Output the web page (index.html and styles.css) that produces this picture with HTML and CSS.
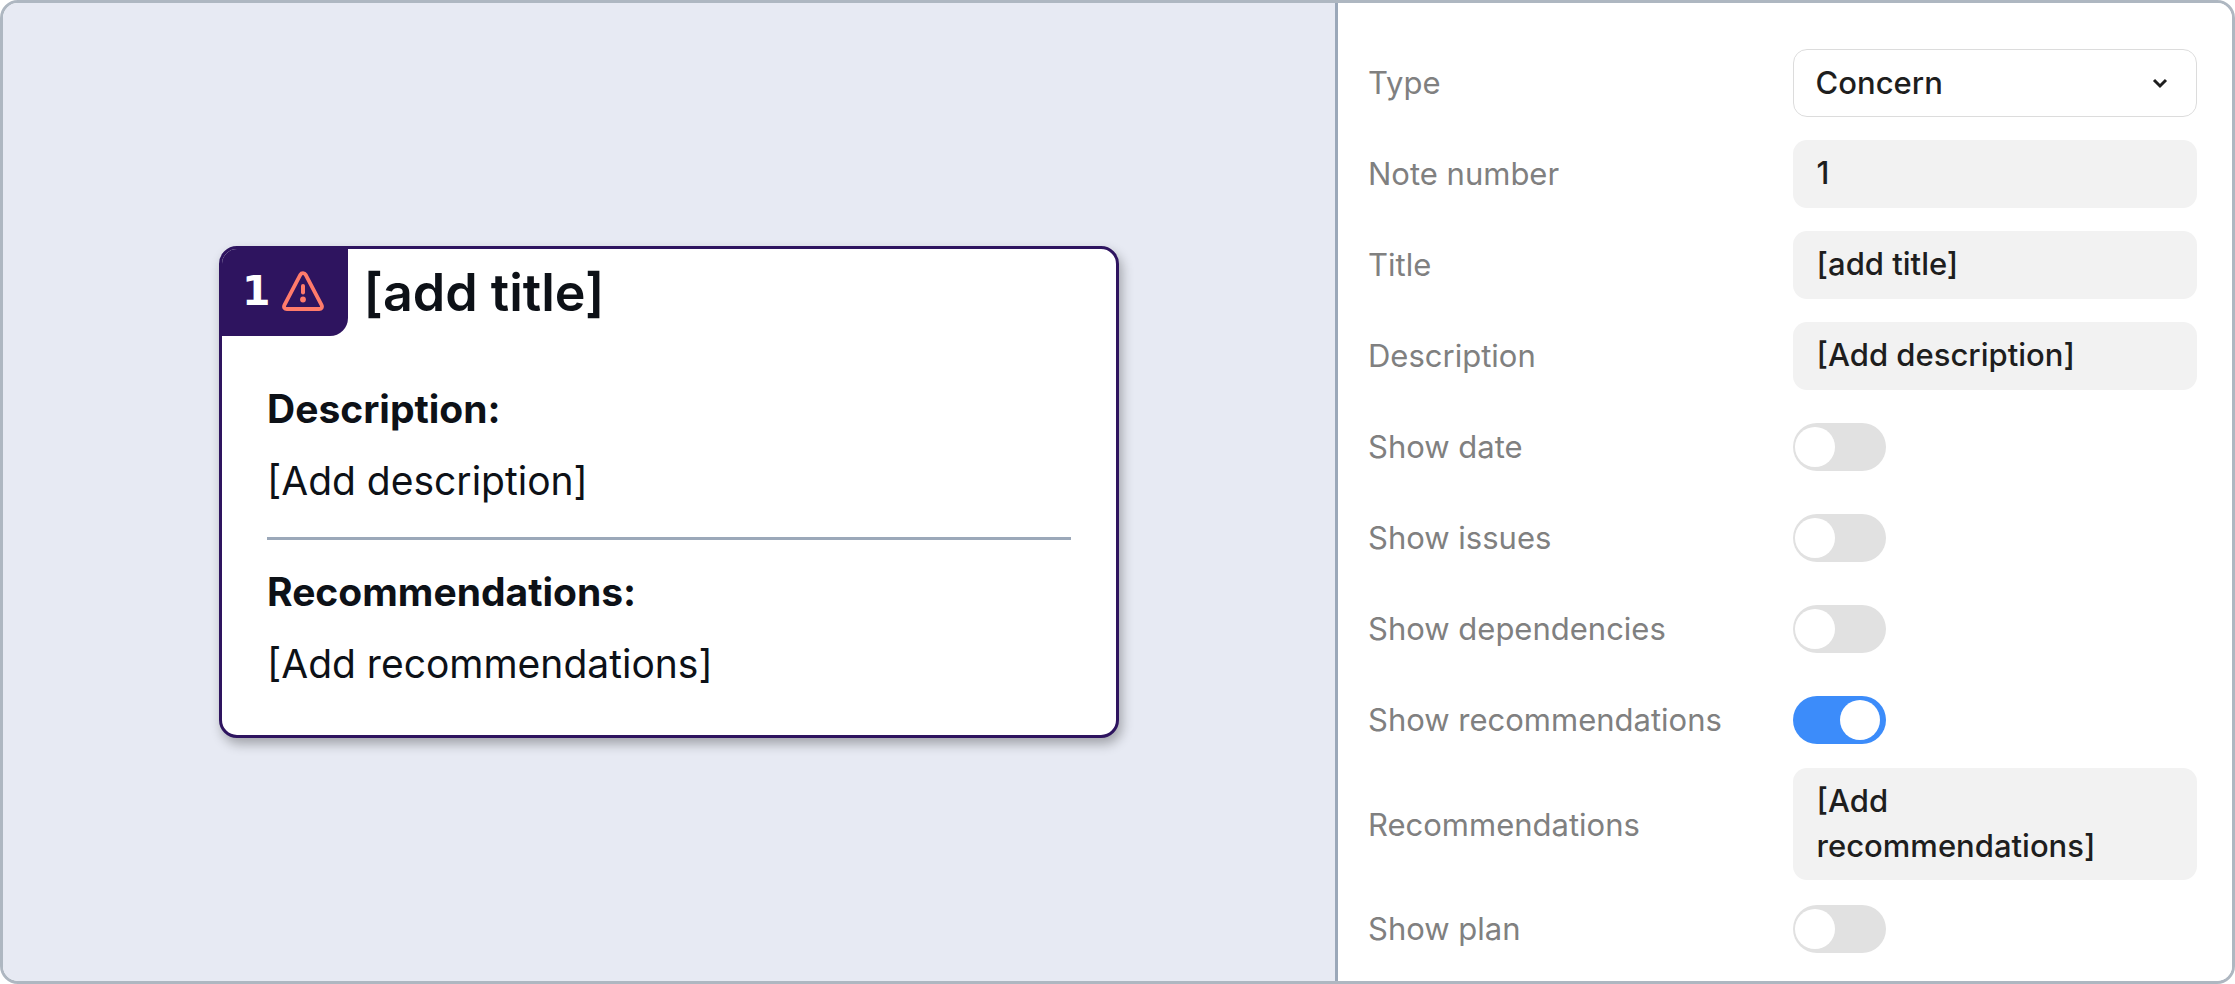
FILE: index.html
```html
<!DOCTYPE html>
<html lang="en">
<head>
<meta charset="utf-8">
<title>Note properties</title>
<link rel="stylesheet" href="styles.css">
</head>
<body>
<main class="frame">
  <section class="canvas">
    <article class="note">
      <header class="note-header">
        <div class="note-badge">
          <span class="note-number">1</span>
          <svg class="note-icon" viewBox="0 0 42 40" fill="none" aria-hidden="true">
            <path d="M18.4 3.6 2.4 34.2C1.4 36.2 2.6 38 4.8 38H37.2C39.4 38 40.6 36.2 39.6 34.2L23.6 3.6C22.5 1.6 19.5 1.6 18.4 3.6Z" stroke="#ff7b6b" stroke-width="3.8" stroke-linejoin="round"/>
            <path d="M21 15V21.5" stroke="#ff7b6b" stroke-width="4" stroke-linecap="round"/>
            <circle cx="21" cy="28.5" r="2.9" fill="#ff7b6b"/>
          </svg>
        </div>
        <h1 class="note-title">[add title]</h1>
      </header>
      <div class="note-body">
        <section class="note-section">
          <h2 class="note-heading">Description:</h2>
          <p class="note-text">[Add description]</p>
        </section>
        <hr class="note-rule">
        <section class="note-section">
          <h2 class="note-heading">Recommendations:</h2>
          <p class="note-text">[Add recommendations]</p>
        </section>
      </div>
    </article>
  </section>
  <form class="panel">
    <div class="row">
      <label class="label" for="type">Type</label>
      <div class="select-wrap">
        <select class="field field-select" id="type"><option>Concern</option></select>
        <svg class="chevron" viewBox="0 0 16 12" fill="none" aria-hidden="true"><path d="M2 3 8 9 14 3" stroke="#1e1e1e" stroke-width="3"/></svg>
      </div>
    </div>
    <div class="row">
      <label class="label" for="number">Note number</label>
      <input class="field" id="number" type="text" value="1">
    </div>
    <div class="row">
      <label class="label" for="title">Title</label>
      <input class="field" id="title" type="text" value="[add title]">
    </div>
    <div class="row">
      <label class="label" for="description">Description</label>
      <input class="field" id="description" type="text" value="[Add description]">
    </div>
    <div class="row">
      <label class="label" for="date">Show date</label>
      <input class="toggle" id="date" type="checkbox" role="switch">
    </div>
    <div class="row">
      <label class="label" for="issues">Show issues</label>
      <input class="toggle" id="issues" type="checkbox" role="switch">
    </div>
    <div class="row">
      <label class="label" for="dependencies">Show dependencies</label>
      <input class="toggle" id="dependencies" type="checkbox" role="switch">
    </div>
    <div class="row">
      <label class="label" for="show-recommendations">Show recommendations</label>
      <input class="toggle" id="show-recommendations" type="checkbox" role="switch" checked>
    </div>
    <div class="row">
      <label class="label" for="recommendations">Recommendations</label>
      <textarea class="field field-area" id="recommendations" rows="2">[Add recommendations]</textarea>
    </div>
    <div class="row">
      <label class="label" for="plan">Show plan</label>
      <input class="toggle" id="plan" type="checkbox" role="switch">
    </div>
  </form>
</main>
</body>
</html>
```

FILE: styles.css
```css
* {
  box-sizing: border-box;
}

body {
  margin: 0;
  background: #fff;
  color: #0d1117;
  font-family: Inter, "Liberation Sans", sans-serif;
}

.frame {
  display: grid;
  grid-template-columns: 444fr 299fr;
  min-height: 100vh;
  overflow: hidden;
  border: 3px solid #aeb7c1;
  border-radius: 18px;
}

.canvas {
  display: flex;
  align-items: center;
  justify-content: center;
  background: #e7eaf3;
}

.note {
  width: 900px;
  max-width: 90%;
  overflow: hidden;
  border: 3px solid #2e145f;
  border-radius: 18px;
  background: #fff;
  box-shadow: 3px 6px 12px rgba(0, 0, 0, 0.3);
}

.note-header {
  display: flex;
  align-items: center;
  gap: 16px;
}

.note-badge {
  display: flex;
  align-items: center;
  gap: 11px;
  height: 87px;
  padding: 0 24px 4px 20px;
  border-bottom-right-radius: 18px;
  background: #2e145f;
}

.note-number {
  color: #fff;
  font-family: "DejaVu Sans", sans-serif;
  font-size: 41px;
  font-weight: 700;
  line-height: 54px;
}

.note-icon {
  width: 42px;
  height: 40px;
}

.note-title {
  margin: 0;
  font-size: 52px;
  font-weight: 600;
  line-height: 60px;
}

.note-body {
  padding: 46px 45px 44px;
}

.note-section {
  display: flex;
  flex-direction: column;
  gap: 18px;
}

.note-heading,
.note-text {
  margin: 0;
  font-size: 39px;
  line-height: 54px;
}

.note-heading {
  font-weight: 700;
}

.note-text {
  font-weight: 400;
}

.note-rule {
  height: 3px;
  margin: 29px 0 25px;
  border: 0;
  background: #9ba8b9;
}

.panel {
  padding: 34px 35px 0 30px;
  border-left: 3px solid #9ba8b9;
  background: #fff;
}

.row {
  display: grid;
  grid-template-columns: 21fr 20fr;
  align-items: center;
  min-height: 91px;
  padding: 3px 0;
}

.label {
  color: #808080;
  font-size: 31px;
  line-height: 45px;
}

.field {
  display: block;
  width: 100%;
  height: 68px;
  margin: 0;
  padding: 0 24px 2px;
  border: 0;
  border-radius: 14px;
  background: #f2f2f2;
  color: #1e1e1e;
  font-family: inherit;
  font-size: 31px;
  font-weight: 500;
  line-height: 45px;
}

.select-wrap {
  position: relative;
}

.field-select {
  padding: 0 22px;
  border: 1px solid #dcdcdc;
  background: #fff;
  appearance: none;
}

.chevron {
  position: absolute;
  top: 28px;
  right: 29px;
  width: 16px;
  height: 12px;
  pointer-events: none;
}

.field-area {
  height: 112px;
  padding: 10px 24px 12px;
  overflow: hidden;
  resize: none;
}

.toggle {
  display: flex;
  align-items: center;
  width: 93px;
  height: 48px;
  margin: 0;
  padding: 0 2px;
  border-radius: 24px;
  background: #e1e1e1;
  appearance: none;
}

.toggle::before {
  width: 40px;
  height: 40px;
  border-radius: 50%;
  background: #fff;
  content: "";
}

.toggle:checked {
  justify-content: flex-end;
  padding: 0 6px;
  background: #3c8cfa;
}
```
